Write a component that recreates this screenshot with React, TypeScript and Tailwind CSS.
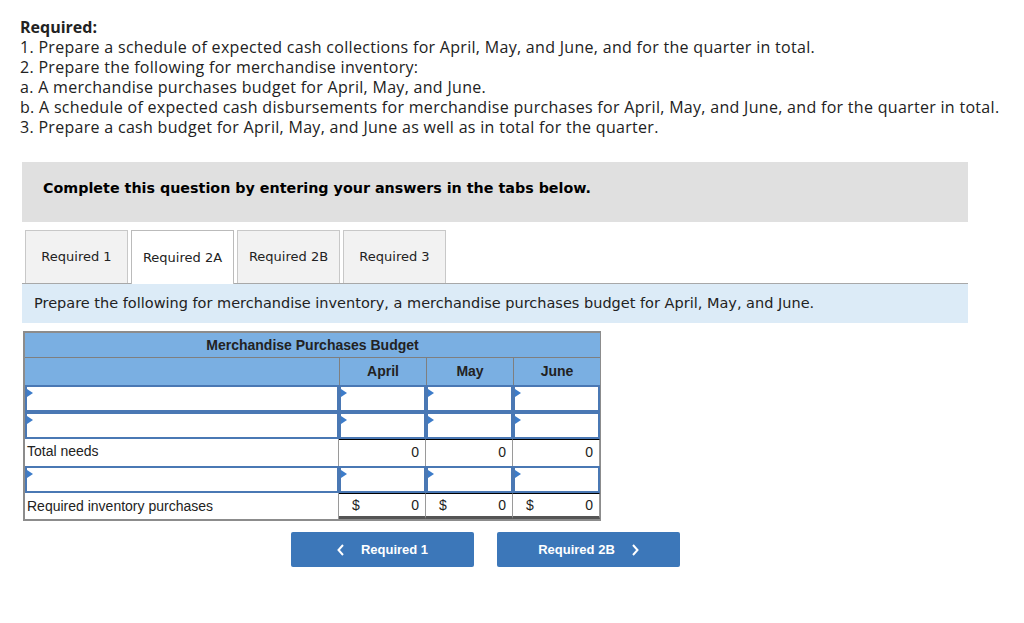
import React from 'react';

const InputCell: React.FC = () => (
  <div className="relative h-full bg-white border-2 border-[#4a78b4]">
    <span className="absolute left-0 top-[2px] w-0 h-0 border-y-[4px] border-l-[6px] border-y-transparent border-l-[#3d7cc9]" />
  </div>
);

const InputRow: React.FC = () => (
  <div className="grid grid-cols-[314px_87px_87px_87px] h-[27px]">
    <InputCell />
    <InputCell />
    <InputCell />
    <InputCell />
  </div>
);

export default function App() {
  const tabs = ['Required 1', 'Required 2A', 'Required 2B', 'Required 3'];

  return (
    <div className="w-[1024px] h-[623px] bg-white relative overflow-hidden">
      {/* Question text */}
      <div className="pl-[20px] pt-[17px] text-[16px] leading-[20px] tracking-[0.3px] text-[#222] font-['Open_Sans',sans-serif]">
        <p className="font-bold tracking-normal">Required:</p>
        <p>1. Prepare a schedule of expected cash collections for April, May, and June, and for the quarter in total.</p>
        <p>2. Prepare the following for merchandise inventory:</p>
        <p>a. A merchandise purchases budget for April, May, and June.</p>
        <p>b. A schedule of expected cash disbursements for merchandise purchases for April, May, and June, and for the quarter in total.</p>
        <p>3. Prepare a cash budget for April, May, and June as well as in total for the quarter.</p>
      </div>

      <div className="ml-[22px] w-[946px] mt-[25px] font-['DejaVu_Sans',Verdana,sans-serif]">
        <div className="h-[60px] bg-[#e0e0e0] flex items-center pb-[6px] pl-[21px] text-[14.3px] font-bold text-black">
          Complete this question by entering your answers in the tabs below.
        </div>

        {/* Tabs */}
        <div className="mt-[8px] flex items-end gap-[3px] pl-[3px] border-b border-[#a8a8a8] h-[54px]">
          {tabs.map((t, i) => (
            <div
              key={t}
              className={`h-[53px] w-[103px] flex items-center justify-center text-[13px] text-[#222] border border-b-0 ${
                i === 1 ? 'bg-white border-[#bbb] h-[54px] -mb-px' : 'bg-[#f2f2f2] border-[#c8c8c8]'
              }`}
            >
              {t}
            </div>
          ))}
        </div>

        <div className="h-[39px] bg-[#dcebf7] flex items-center pl-[12px] text-[14.5px] text-[#222]">
          Prepare the following for merchandise inventory, a merchandise purchases budget for April, May, and June.
        </div>
      </div>

      {/* Budget table */}
      <div className="ml-[23px] mt-[8px] w-[578px] border-2 border-[#8c8c8c] border-r-[1px] font-['Liberation_Sans',Arial,sans-serif] text-[14px] text-[#222]">
        <div className="h-[25px] bg-[#7aafe2] border-b border-[#7f7f7f] flex items-center justify-center font-bold">
          Merchandise Purchases Budget
        </div>
        <div className="grid grid-cols-[314px_87px_87px_87px] h-[27px] bg-[#7aafe2] font-bold">
          <div />
          <div className="border-l border-[#7f7f7f] flex items-center justify-center">April</div>
          <div className="border-l border-[#7f7f7f] flex items-center justify-center">May</div>
          <div className="border-l border-[#7f7f7f] flex items-center justify-center">June</div>
        </div>
        <InputRow />
        <InputRow />
        <div className="grid grid-cols-[314px_87px_87px_87px] h-[27px]">
          <div className="flex items-center pl-[2px] pb-[2px] border-r border-[#9a9a9a]">Total needs</div>
          {[0, 1, 2].map((i) => (
            <div key={i} className="flex items-center justify-end pr-[6px] pb-[2px] border-t border-black border-r border-r-[#9a9a9a]">
              0
            </div>
          ))}
        </div>
        <InputRow />
        <div className="grid grid-cols-[314px_87px_87px_87px] h-[26px]">
          <div className="flex items-center pl-[2px] border-r border-[#9a9a9a]">Required inventory purchases</div>
          {[0, 1, 2].map((i) => (
            <div
              key={i}
              className="flex items-center justify-between pl-[13px] pr-[6px] border-t border-black border-b-[3px] border-b-[#555] border-r border-r-[#9a9a9a]"
            >
              <span>$</span>
              <span>0</span>
            </div>
          ))}
        </div>
      </div>

      {/* Nav buttons */}
      <div className="flex gap-[23px] ml-[291px] mt-[11px] font-['Liberation_Sans',Arial,sans-serif] text-[13px] font-bold text-white">
        <button className="w-[183px] h-[35px] rounded-[2px] bg-[#3c77b9] flex items-center justify-center gap-[16px]">
          <svg width="8" height="12" viewBox="0 0 8 12" fill="none" stroke="white" strokeWidth="2">
            <path d="M6 1L1.5 6L6 11" />
          </svg>
          <span>Required 1</span>
        </button>
        <button className="w-[183px] h-[35px] rounded-[2px] bg-[#3c77b9] flex items-center justify-center gap-[16px]">
          <span>Required 2B</span>
          <svg width="8" height="12" viewBox="0 0 8 12" fill="none" stroke="white" strokeWidth="2">
            <path d="M2 1L6.5 6L2 11" />
          </svg>
        </button>
      </div>
    </div>
  );
}
